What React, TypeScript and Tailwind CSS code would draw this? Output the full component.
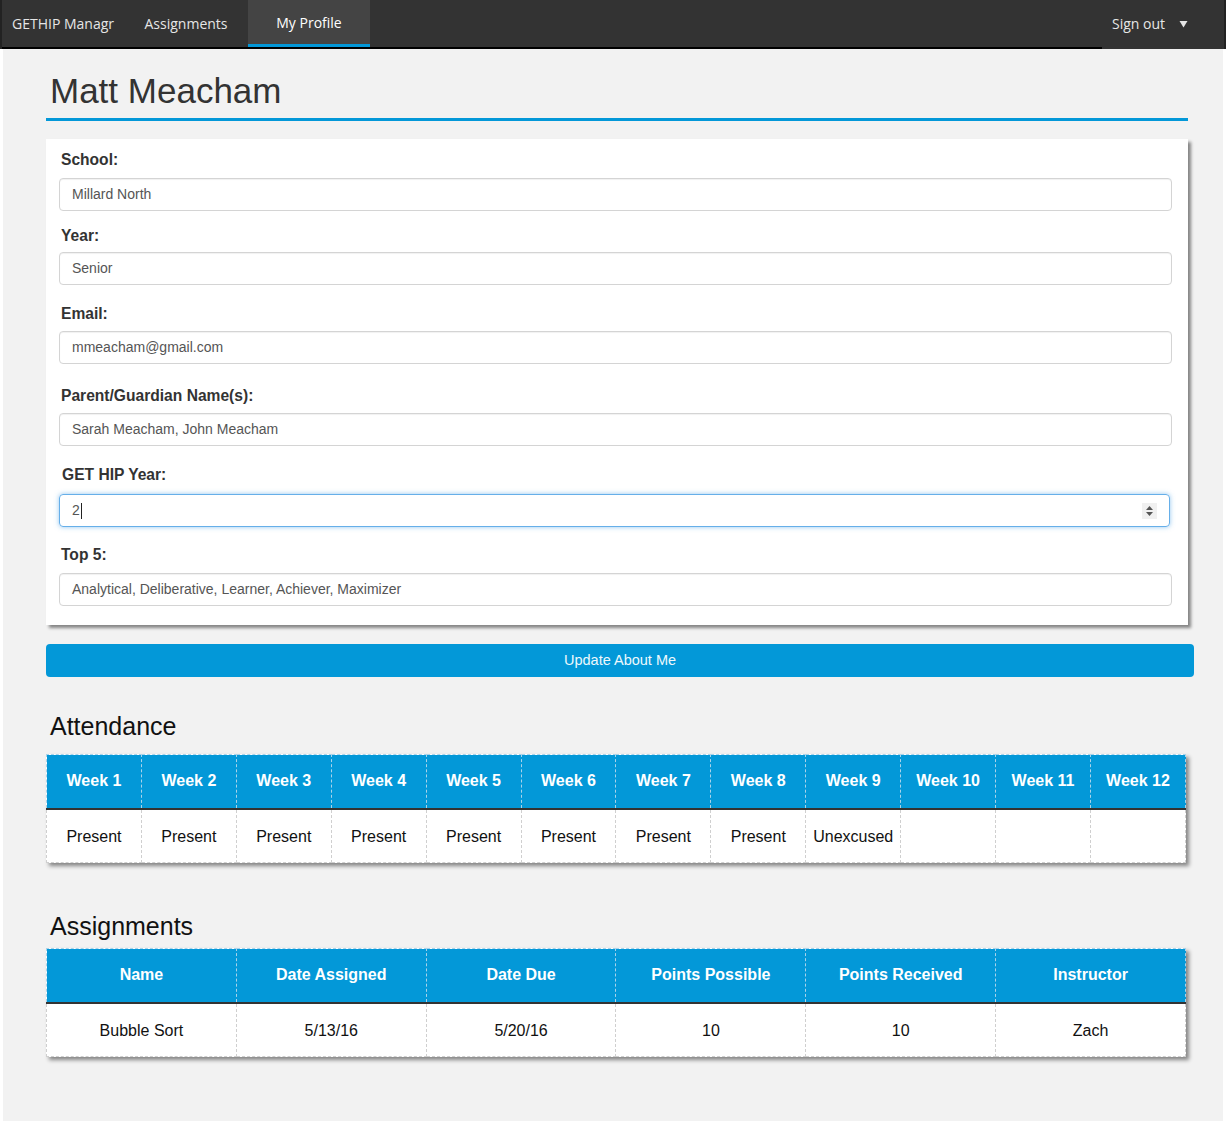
import { FC } from "react";

const blue = "bg-[#0398d8]";

const fields = [
  { label: "School:", value: "Millard North", lm: "mt-0", im: "mt-[8px]" },
  { label: "Year:", value: "Senior", lm: "mt-[15px]", im: "mt-[6px]" },
  { label: "Email:", value: "mmeacham@gmail.com", lm: "mt-[19px]", im: "mt-[7px]" },
  { label: "Parent/Guardian Name(s):", value: "Sarah Meacham, John Meacham", lm: "mt-[22px]", im: "mt-[7px]" },
];

const Field: FC<{ label: string; value: string; lm: string; im: string }> = ({ label, value, lm, im }) => (
  <div>
    <div className={`${lm} pl-[2px] text-[15.6px] leading-[20px] font-bold text-[#333]`}>{label}</div>
    <div
      className={`${im} flex h-[33px] items-center rounded-[4px] border border-[#d4d4d4] pl-[12px] text-[14px] text-[#555] shadow-[inset_0_1px_1px_rgba(0,0,0,0.06)]`}
    >
      {value}
    </div>
  </div>
);

const Table: FC<{ headers: string[]; cells: string[] }> = ({ headers, cells }) => (
  <table className="w-[1140px] table-fixed border-collapse bg-white shadow-[3px_3px_4px_rgba(0,0,0,0.45)]">
    <thead>
      <tr className={`${blue} h-[54px] border-b-2 border-[#333]`}>
        {headers.map((h) => (
          <th
            key={h}
            className="border border-dashed border-[#a9d3ea] text-center text-[16px] font-bold text-white"
          >
            {h}
          </th>
        ))}
      </tr>
    </thead>
    <tbody>
      <tr className="h-[54px]">
        {cells.map((c, i) => (
          <td key={i} className="border border-dashed border-[#cfcfcf] pt-[2px] text-center text-[16px] text-[#111]">
            {c}
          </td>
        ))}
      </tr>
    </tbody>
  </table>
);

const weeks = Array.from({ length: 12 }, (_, i) => `Week ${i + 1}`);
const attendance = [
  "Present",
  "Present",
  "Present",
  "Present",
  "Present",
  "Present",
  "Present",
  "Present",
  "Unexcused",
  "",
  "",
  "",
];

const App: FC = () => {
  return (
    <div className="min-h-[1125px] bg-white font-['Liberation_Sans',Arial,sans-serif]">
      {/* top nav */}
      <nav className="flex h-[49px] border-x-2 border-[#222] bg-[#333] font-['Open_Sans',sans-serif] text-[14px] text-[#e6e6e6]">
        <div className="flex flex-1 border-b-2 border-black">
          <div className="flex w-[122px] items-center pl-[10px]">GETHIP Managr</div>
          <div className="flex w-[124px] items-center justify-center">Assignments</div>
          <div className="flex w-[122px] items-center justify-center border-b-[3px] border-[#0398d8] bg-[#444] text-white">
            My Profile
          </div>
        </div>
        <div className="flex w-[122px] items-center gap-[14px] pb-[2px] pl-[10px]">
          <span>Sign out</span>
          <svg width="9" height="8" viewBox="0 0 9 8">
            <path d="M0.5 1 L8.5 1 L4.5 7.5 Z" fill="#e6e6e6" />
          </svg>
        </div>
      </nav>

      <main className="mx-[3px] bg-[#f2f2f2] pb-[64px] pl-[43px]">
        <div className="w-[1142px] border-b-[3px] border-[#0398d8] pt-[22px] pb-[7px] pl-[4px]">
          <h1 className="text-[35px] leading-[40px] text-[#333]">Matt Meacham</h1>
        </div>

        {/* about me card */}
        <div className="mt-[18px] w-[1142px] bg-white pt-[11px] pr-[16px] pb-[19px] pl-[13px] shadow-[3px_3px_3px_rgba(0,0,0,0.45)]">
          {fields.map((f) => (
            <Field key={f.label} {...f} />
          ))}
          <div className="mt-[19px] pl-[3px] text-[15.6px] leading-[20px] font-bold text-[#333]">GET HIP Year:</div>
          <div className="mt-[9px] mr-[2px] flex h-[33px] items-center rounded-[4px] border border-[#66afe9] pl-[12px] text-[14px] text-[#555] shadow-[0_0_5px_rgba(102,175,233,0.7)]">
            <span>2</span>
            <span className="ml-[1px] h-[16px] w-px bg-[#222]" />
            <span className="mr-[12px] ml-auto flex h-[16px] w-[15px] items-center justify-center bg-[#f0f0f0]">
              <svg width="9" height="12" viewBox="0 0 9 12">
                <path d="M4.5 1 L8 5 L1 5 Z" fill="#555" />
                <path d="M1 7 L8 7 L4.5 11 Z" fill="#555" />
              </svg>
            </span>
          </div>
          <Field label="Top 5:" value="Analytical, Deliberative, Learner, Achiever, Maximizer" lm="mt-[18px]" im="mt-[8px]" />
        </div>

        <button className={`mt-[19px] flex h-[33px] w-[1148px] items-center justify-center rounded-[4px] ${blue} text-[14.5px] text-[#eef8fd]`}>
          Update About Me
        </button>

        <h2 className="mt-[34px] pl-[4px] text-[25px] leading-[30px] text-[#111]">Attendance</h2>
        <div className="mt-[13px]">
          <Table headers={weeks} cells={attendance} />
        </div>

        <h2 className="mt-[48px] pl-[4px] text-[25px] leading-[30px] text-[#111]">Assignments</h2>
        <div className="mt-[7px]">
          <Table
            headers={["Name", "Date Assigned", "Date Due", "Points Possible", "Points Received", "Instructor"]}
            cells={["Bubble Sort", "5/13/16", "5/20/16", "10", "10", "Zach"]}
          />
        </div>
      </main>
    </div>
  );
};

export default App;
